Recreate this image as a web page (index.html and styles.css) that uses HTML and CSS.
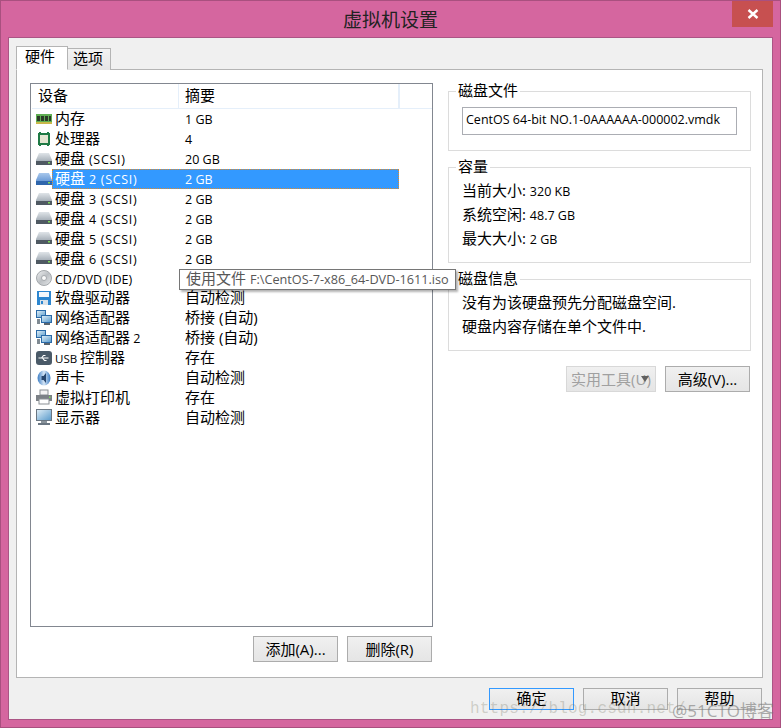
FILE: index.html
```html
<!DOCTYPE html>
<html lang="zh-CN">
<head>
    <meta charset="UTF-8">
    <title>虚拟机设置</title>
    <link rel="stylesheet" href="styles.css">
</head>
<body>
    <svg class="sprites" width="0" height="0">
        <defs>
            <linearGradient id="g-disk" x1="0" y1="0" x2="0" y2="1"><stop offset="0" stop-color="#dfe4e8"/><stop offset="1" stop-color="#8d98a3"/></linearGradient>
            <linearGradient id="g-disk-sel" x1="0" y1="0" x2="0" y2="1"><stop offset="0" stop-color="#a9c8ec"/><stop offset="1" stop-color="#4f86cc"/></linearGradient>
            <linearGradient id="g-screen" x1="0" y1="0" x2="1" y2="1"><stop offset="0" stop-color="#dcecf6"/><stop offset="1" stop-color="#5c9ccc"/></linearGradient>
            <linearGradient id="g-cd" x1="0" y1="0" x2="1" y2="1"><stop offset="0" stop-color="#f2f3f4"/><stop offset="0.5" stop-color="#bcc0c4"/><stop offset="1" stop-color="#e8eaec"/></linearGradient>
            <linearGradient id="g-sound" x1="0" y1="0" x2="1" y2="0"><stop offset="0" stop-color="#3a7cc4"/><stop offset="0.5" stop-color="#d6e6f6"/><stop offset="1" stop-color="#3a7cc4"/></linearGradient>
        </defs>
        <symbol id="i-mem" viewBox="0 0 16 16">
            <rect x="0" y="3" width="16" height="10" fill="#5fae52"/>
            <rect x="1" y="5" width="3" height="5" fill="#2c3a28"/><rect x="5" y="5" width="3" height="5" fill="#2c3a28"/>
            <rect x="9" y="5" width="3" height="5" fill="#2c3a28"/><rect x="13" y="5" width="2" height="5" fill="#2c3a28"/>
            <path d="M0 11h16v2H0z" fill="#c9b84a"/>
        </symbol>
        <symbol id="i-cpu" viewBox="0 0 16 16">
            <rect x="2" y="2" width="12" height="12" fill="#1f7a45"/>
            <path d="M3 14h2v1H3zM11 14h2v1h-2zM3 1h2v1H3zM11 1h2v1h-2z" fill="#1f7a45"/>
            <rect x="4" y="4" width="8" height="8" fill="#e4e6d2"/>
        </symbol>
        <symbol id="i-disk" viewBox="0 0 16 16">
            <path d="M3 2h10l3 7v5H0V9z" fill="url(#g-disk)"/>
            <path d="M0 10h16v4H0z" fill="#4f5962"/>
            <rect x="12" y="11" width="2" height="1.5" fill="#7fd85a"/>
        </symbol>
        <symbol id="i-disk-sel" viewBox="0 0 16 16">
            <path d="M3 2h10l3 7v5H0V9z" fill="url(#g-disk-sel)"/>
            <path d="M0 10h16v4H0z" fill="#2f66ac"/>
            <rect x="12" y="11" width="2" height="1.5" fill="#7fd85a"/>
        </symbol>
        <symbol id="i-cd" viewBox="0 0 16 16">
            <circle cx="8" cy="8" r="7.5" fill="url(#g-cd)" stroke="#a4a8ac"/>
            <circle cx="8" cy="8" r="2.5" fill="#fafafa" stroke="#a4a8ac"/>
        </symbol>
        <symbol id="i-floppy" viewBox="0 0 16 16">
            <path d="M1 1h14v14H1z" fill="#2c86d0"/>
            <rect x="3" y="2" width="10" height="5" fill="#f4f8fc"/>
            <rect x="4" y="10" width="8" height="5" fill="#d9e2ea"/>
            <rect x="5" y="11" width="2" height="3" fill="#2c86d0"/>
        </symbol>
        <symbol id="i-net" viewBox="0 0 16 16">
            <rect x="0" y="0" width="10" height="8" fill="#2a6aa8"/><rect x="1" y="1" width="8" height="6" fill="url(#g-screen)"/>
            <rect x="5" y="5" width="11" height="8" fill="#2a6aa8"/><rect x="6" y="6" width="9" height="6" fill="url(#g-screen)"/>
            <rect x="8" y="13" width="6" height="2" fill="#59646e"/>
            <rect x="1" y="9" width="3" height="5" fill="#7f8a92"/>
        </symbol>
        <symbol id="i-usb" viewBox="0 0 16 16">
            <rect x="0" y="1" width="16" height="14" rx="3" fill="#4a5a68"/>
            <path d="M2.5 8h10M5.5 8l2-2.5h2M6.5 8l2 2.5h2" stroke="#fff" fill="none" stroke-width="1.2"/>
        </symbol>
        <symbol id="i-sound" viewBox="0 0 16 16">
            <ellipse cx="8" cy="8" rx="6.5" ry="7.5" fill="url(#g-sound)"/>
            <path d="M5.5 6h2l2.5-3v10l-2.5-3h-2z" fill="#27466e"/>
        </symbol>
        <symbol id="i-print" viewBox="0 0 16 16">
            <rect x="4" y="1" width="8" height="5" fill="#f4f4f4" stroke="#8a8f94"/>
            <rect x="0" y="6" width="16" height="6" fill="#7b8086"/>
            <rect x="13" y="7.5" width="1.5" height="1.5" fill="#7fd85a"/>
            <rect x="3" y="10" width="10" height="5" fill="#fff" stroke="#8a8f94"/>
        </symbol>
        <symbol id="i-display" viewBox="0 0 16 16">
            <rect x="0" y="0" width="16" height="12" fill="#6a7682"/>
            <rect x="1" y="1" width="14" height="10" fill="url(#g-screen)"/>
            <rect x="5" y="12" width="6" height="2" fill="#8a949c"/>
            <rect x="2" y="14" width="12" height="2" fill="#6a7682"/>
        </symbol>
    </svg>

    <div class="window">
        <div class="titlebar">
            <div class="title">虚拟机设置</div>
            <div class="close-btn">
                <svg width="12" height="10" viewBox="0 0 12 10"><path d="M1.5 1l9 8M10.5 1l-9 8" stroke="#fff" stroke-width="2.4" fill="none"/></svg>
            </div>
        </div>

        <div class="client">
            <div class="tabs">
                <div class="tab active">硬件</div>
                <div class="tab">选项</div>
            </div>

            <div class="pane">
                <div class="left-col">
                    <div class="device-list">
                        <div class="list-head">
                            <div class="head-cell first">设备</div>
                            <div class="head-cell second">摘要</div>
                            <div class="head-cell"></div>
                        </div>
                        <div class="row"><svg class="ico"><use href="#i-mem"/></svg><span class="name">内存</span><span class="value lat">1 GB</span></div>
                        <div class="row"><svg class="ico"><use href="#i-cpu"/></svg><span class="name">处理器</span><span class="value lat">4</span></div>
                        <div class="row"><svg class="ico"><use href="#i-disk"/></svg><span class="name">硬盘<span class="lat wide"> (SCSI)</span></span><span class="value lat">20 GB</span></div>
                        <div class="row selected"><svg class="ico"><use href="#i-disk-sel"/></svg><div class="sel-box"><span class="name">硬盘<span class="lat wide"> 2 (SCSI)</span></span><span class="value lat">2 GB</span></div></div>
                        <div class="row"><svg class="ico"><use href="#i-disk"/></svg><span class="name">硬盘<span class="lat wide"> 3 (SCSI)</span></span><span class="value lat">2 GB</span></div>
                        <div class="row"><svg class="ico"><use href="#i-disk"/></svg><span class="name">硬盘<span class="lat wide"> 4 (SCSI)</span></span><span class="value lat">2 GB</span></div>
                        <div class="row"><svg class="ico"><use href="#i-disk"/></svg><span class="name">硬盘<span class="lat wide"> 5 (SCSI)</span></span><span class="value lat">2 GB</span></div>
                        <div class="row"><svg class="ico"><use href="#i-disk"/></svg><span class="name">硬盘<span class="lat wide"> 6 (SCSI)</span></span><span class="value lat">2 GB</span></div>
                        <div class="row"><svg class="ico"><use href="#i-cd"/></svg><span class="name lat">CD/DVD (IDE)</span><span class="value"></span></div>
                        <div class="row"><svg class="ico"><use href="#i-floppy"/></svg><span class="name">软盘驱动器</span><span class="value">自动检测</span></div>
                        <div class="row"><svg class="ico"><use href="#i-net"/></svg><span class="name">网络适配器</span><span class="value">桥接 (自动)</span></div>
                        <div class="row"><svg class="ico"><use href="#i-net"/></svg><span class="name">网络适配器<span class="lat"> 2</span></span><span class="value">桥接 (自动)</span></div>
                        <div class="row"><svg class="ico"><use href="#i-usb"/></svg><span class="name"><span class="lat narrow">USB </span>控制器</span><span class="value">存在</span></div>
                        <div class="row"><svg class="ico"><use href="#i-sound"/></svg><span class="name">声卡</span><span class="value">自动检测</span></div>
                        <div class="row"><svg class="ico"><use href="#i-print"/></svg><span class="name">虚拟打印机</span><span class="value">存在</span></div>
                        <div class="row"><svg class="ico"><use href="#i-display"/></svg><span class="name">显示器</span><span class="value">自动检测</span></div>
                    </div>
                    <div class="list-buttons">
                        <button class="btn tall">添加(A)...</button>
                        <button class="btn tall">删除(R)</button>
                    </div>
                </div>

                <div class="right-col">
                    <fieldset class="group file-group">
                        <legend>磁盘文件</legend>
                        <div class="file-input">CentOS 64-bit NO.1-0AAAAAA-000002.vmdk</div>
                    </fieldset>
                    <fieldset class="group size-group">
                        <legend>容量</legend>
                        <div class="line">当前大小: <span class="lat">320 KB</span></div>
                        <div class="line">系统空闲: <span class="lat">48.7 GB</span></div>
                        <div class="line">最大大小: <span class="lat">2 GB</span></div>
                    </fieldset>
                    <fieldset class="group info-group">
                        <legend>磁盘信息</legend>
                        <div class="line">没有为该硬盘预先分配磁盘空间.</div>
                        <div class="line">硬盘内容存储在单个文件中.</div>
                    </fieldset>
                    <div class="tool-buttons">
                        <button class="btn tall disabled">实用工具(U)<span class="caret"></span></button>
                        <button class="btn tall">高级(V)...</button>
                    </div>
                </div>
            </div>

            <div class="dialog-buttons">
                <button class="btn default">确定</button>
                <button class="btn">取消</button>
                <button class="btn">帮助</button>
            </div>
        </div>

        <div class="tooltip">使用文件 <span class="tip-path">F:\CentOS-7-x86_64-DVD-1611.iso</span></div>
        <div class="mark-url">https://blog.csdn.net/</div>
        <div class="mark-site">@51CTO博客</div>
    </div>
</body>
</html>
```

FILE: styles.css
```css
* {
    box-sizing: border-box;
}
html, body {
    margin: 0;
    height: 100%;
    overflow: hidden;
}
body {
    font-family: "Open Sans", "Noto Sans CJK SC", sans-serif;
    font-size: 15px;
    color: #000;
    background-color: #d5669f;
}
.sprites {
    display: block;
}
.lat {
    font-size: 12.5px;
}
.lat.wide {
    letter-spacing: 0.7px;
}
.lat.narrow {
    font-size: 11.5px;
}
.window {
    position: relative;
    width: 781px;
    height: 728px;
    padding: 0 7px 7px;
    border: 1px solid #a9507f;
    background-color: #d5669f;
}
.titlebar {
    position: relative;
    height: 36px;
    margin: 0 -7px;
}
.title {
    padding-top: 6px;
    text-align: center;
    font-size: 19px;
    line-height: 26px;
    color: #222;
}
.close-btn {
    position: absolute;
    top: 0;
    right: 7px;
    width: 41px;
    height: 26px;
    display: flex;
    align-items: center;
    justify-content: center;
    background-color: #c75050;
}
.client {
    height: 683px;
    padding: 8px 9px 0 7px;
    border: 1px solid #ab5585;
    background-color: #f0f0f0;
}
.tabs {
    display: flex;
    align-items: flex-end;
    height: 24px;
    margin-bottom: -1px;
    position: relative;
}
.tab {
    width: 44px;
    height: 22px;
    padding-right: 2px;
    border: 1px solid #b4b4b4;
    border-bottom: none;
    background: linear-gradient(#f2f2f2, #e6e6e6);
    line-height: 19px;
    text-align: center;
}
.tab.active {
    width: 52px;
    height: 24px;
    padding-right: 4px;
    background: #fff;
    line-height: 18px;
    border-bottom: 1px solid #fff;
    margin-right: -1px;
    position: relative;
    z-index: 1;
}
.pane {
    display: flex;
    height: 609px;
    padding: 13px 11px 0 13px;
    border: 1px solid #b4b4b4;
    background-color: #fff;
}
.left-col {
    width: 403px;
    margin-right: 15px;
}
.device-list {
    height: 544px;
    padding-left: 1px;
    border: 1px solid #828790;
}
.list-head {
    display: flex;
    height: 25px;
    border-bottom: 1px solid #e5effa;
}
.head-cell {
    line-height: 23px;
    border-right: 1px solid #e5effa;
}
.head-cell.first {
    width: 147px;
    padding-left: 6px;
}
.head-cell.second {
    width: 220px;
    padding-left: 6px;
}
.row {
    display: flex;
    align-items: center;
    height: 19.9px;
    padding-left: 4px;
    white-space: nowrap;
}
.row .name {
    width: 130px;
    flex: none;
    padding-bottom: 2px;
}
.row .value {
    padding-bottom: 2px;
}
.row .name.lat, .row .value.lat {
    padding-top: 2px;
    padding-bottom: 0;
}
.ico {
    width: 16px;
    height: 16px;
    flex: none;
    margin-right: 3px;
}
.sel-box {
    display: flex;
    align-items: center;
    width: 347px;
    height: 20px;
    margin-left: -3px;
    padding-left: 2px;
    color: #fff;
    background-color: #3399ff;
    border: 1px dotted #e08a2a;
}
.list-buttons {
    display: flex;
    justify-content: flex-end;
    gap: 9px;
    margin-top: 9px;
    padding-right: 1px;
}
.btn {
    position: relative;
    width: 85px;
    height: 22px;
    padding: 0 0 2px;
    border: 1px solid #acacac;
    background: linear-gradient(#f0f0f0, #e5e5e5);
    font-family: "Open Sans", "Noto Sans CJK SC", sans-serif;
    font-size: 15px;
    line-height: 16px;
    color: #000;
}
.btn.tall {
    height: 26px;
    padding-bottom: 0;
}
.btn.default {
    border: 1px solid #3399ff;
}
.btn.disabled {
    width: 90px;
    color: #a0a0a0;
    border-color: #d8d8d8;
}
.caret {
    position: absolute;
    right: 6px;
    top: 9px;
    border: 4px solid transparent;
    border-top: 6px solid #606060;
    border-bottom: none;
}
.right-col {
    width: 303px;
}
.group {
    margin: 0 0 7px;
    padding: 2px 13px 0;
    border: 1px solid #dcdcdc;
    min-width: 0;
}
.group legend {
    padding: 0 2px 2px;
    margin-left: -6px;
    line-height: 16px;
}
.file-group {
    height: 69px;
    margin-top: -1px;
}
.size-group {
    height: 105px;
}
.info-group {
    height: 81px;
}
.file-input {
    width: 275px;
    height: 28px;
    margin-top: 5px;
    padding-left: 3px;
    border: 1px solid #abadb3;
    font-size: 12.5px;
    line-height: 23px;
    white-space: nowrap;
}
.line {
    height: 24px;
    line-height: 24px;
}
.tool-buttons {
    display: flex;
    justify-content: flex-end;
    align-items: center;
    gap: 9px;
    margin-top: 15px;
    padding-right: 1px;
}
.dialog-buttons {
    display: flex;
    justify-content: flex-end;
    gap: 9px;
    margin-top: 10px;
    padding-right: 1px;
}
.tooltip {
    position: absolute;
    left: 178px;
    top: 268px;
    width: 277px;
    height: 21px;
    padding-left: 6px;
    border: 1px solid #767676;
    background-color: #fff;
    box-shadow: 2px 2px 2px rgba(0, 0, 0, 0.3);
    color: #575757;
    line-height: 16px;
    white-space: nowrap;
}
.tip-path {
    font-size: 12.7px;
}
.mark-url {
    position: absolute;
    left: 469px;
    top: 699px;
    font-family: "Liberation Mono", monospace;
    font-size: 16px;
    letter-spacing: 0.2px;
    color: rgba(120, 120, 100, 0.3);
    white-space: nowrap;
}
.mark-site {
    position: absolute;
    left: 671px;
    top: 696px;
    font-size: 17px;
    color: rgba(120, 120, 120, 0.6);
    white-space: nowrap;
}
```
